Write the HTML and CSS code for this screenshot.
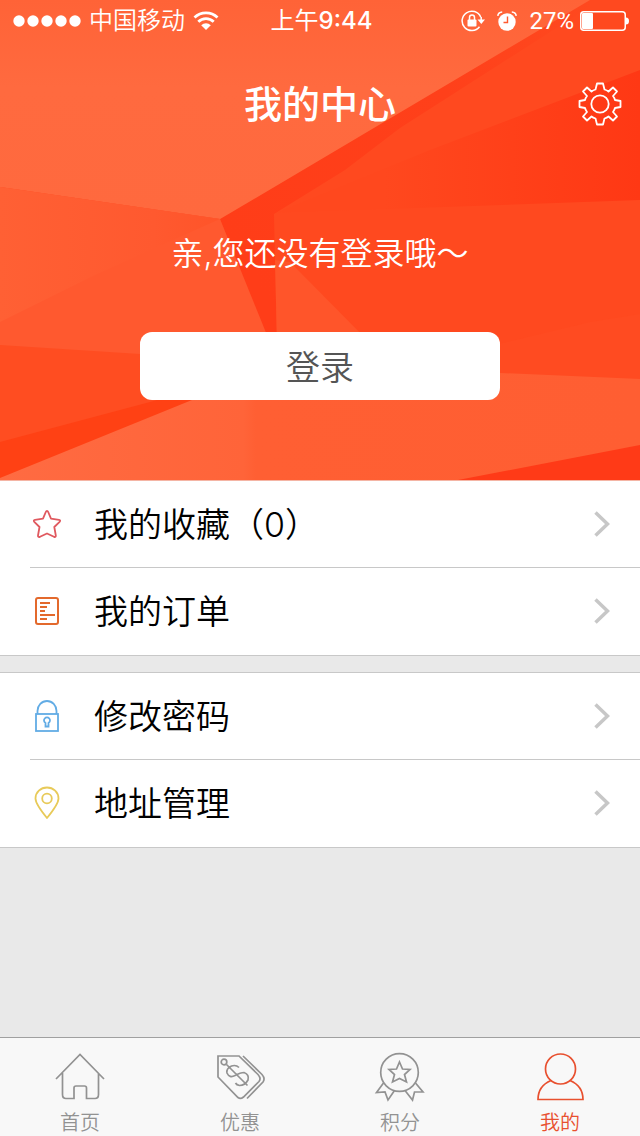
FILE: index.html
```html
<!DOCTYPE html>
<html lang="zh-CN">
<head>
<meta charset="utf-8">
<meta name="viewport" content="width=device-width, initial-scale=1">
<title>我的中心</title>
<link rel="stylesheet" href="styles.css">
</head>
<body>
<div class="app">
  <header class="hero">
    <svg class="hero-art" viewBox="0 0 640 480" preserveAspectRatio="none" aria-hidden="true">
      <defs>
        <linearGradient id="right-shade" x1="0.3" y1="0" x2="1" y2="0">
          <stop offset="0" stop-color="#ff481e"/><stop offset="1" stop-color="#ff3814"/>
        </linearGradient>
        <linearGradient id="top-light" x1="0" y1="0" x2="0" y2="1">
          <stop offset="0" stop-color="#ff6337"/><stop offset="0.4" stop-color="#ff6a3f"/><stop offset="1" stop-color="#ff693e"/>
        </linearGradient>
        <linearGradient id="left-light" x1="0" y1="0" x2="1" y2="0">
          <stop offset="0" stop-color="#ff6034"/><stop offset="0.7" stop-color="#ff592f"/><stop offset="1" stop-color="#ff5429"/>
        </linearGradient>
        <linearGradient id="floor" x1="0" y1="0" x2="1" y2="0">
          <stop offset="0" stop-color="#ff6b42"/><stop offset="0.38" stop-color="#ff6439"/><stop offset="0.4" stop-color="#ff5f33"/><stop offset="1" stop-color="#ff5e32"/>
        </linearGradient>
        <linearGradient id="band" gradientUnits="userSpaceOnUse" x1="220" y1="219" x2="590" y2="0">
          <stop offset="0" stop-color="#ff3d18"/><stop offset="0.6" stop-color="#ff401a"/><stop offset="1" stop-color="#ff491f"/>
        </linearGradient>
      </defs>
      <rect width="640" height="480" fill="#ff491f"/>
      <path d="M640 70 430 150 275 213 640 200Z" fill="url(#right-shade)"/>
      <path d="M590 0 220 219 268 345H277L274 214 345 170 400 128 500 64 600 0Z" fill="url(#band)"/>
      <path d="M275 260 277 345H372L290 262Z" fill="#ff552a"/>
      <path d="M0 0H590L220 219 0 187Z" fill="url(#top-light)"/>
      <path d="M0 187 220 219 271 345V410H0Z" fill="#ff592f"/>
      <path d="M0 187 220 219 95 275 0 322Z" fill="url(#left-light)"/>
      <path d="M0 345 140 354 290 370V410L0 450Z" fill="#ff4d21"/>
      <path d="M0 442 150 402 300 360V410L0 480Z" fill="#ff4114"/>
      <path d="M490 346 590 322 640 314V380H490Z" fill="#ff4b21"/>
      <path d="M0 478 192 400 300 373H500L640 379V480H0Z" fill="url(#floor)"/>
      <path d="M640 445 458 480H640Z" fill="#ff3a17"/>
    </svg>

    <div class="status">
      <div class="status-left">
        <svg width="68" height="12" viewBox="0 0 68 12" fill="#fff" role="img" aria-label="信号">
          <circle cx="6" cy="6" r="5.700"/><circle cx="20" cy="6" r="5.700"/><circle cx="34" cy="6" r="5.700"/><circle cx="48" cy="6" r="5.700"/><circle cx="62" cy="6" r="5.700"/>
        </svg>
        <span>中国移动</span>
        <svg width="26" height="20" viewBox="0 0 26 20" role="img" aria-label="无线网络">
          <path d="M1.500 6.600A16.500 16.500 0 0 1 24.500 6.600M5.300 10.700A11 11 0 0 1 20.700 10.700" fill="none" stroke="#fff" stroke-width="2.800"/>
          <path d="M13 19 8.200 14.200A7 7 0 0 1 17.800 14.200Z" fill="#fff"/>
        </svg>
      </div>
      <time class="status-time">上午<span class="clock">9:44</span></time>
      <div class="status-right">
        <svg width="24" height="22" viewBox="0 0 24 22" fill="none" stroke="#fff" stroke-width="1.500" role="img" aria-label="方向锁定">
          <path d="M19.700 7A9.700 9.700 0 1 0 18.500 16.800M20.200 7V10"/>
          <path d="M16.500 9.500H24L20.300 14Z" fill="#fff" stroke="none"/>
          <rect x="6.500" y="9.500" width="9" height="7" rx="1" fill="#fff" stroke="none"/>
          <path d="M8.500 10V7.500a2.500 2.500 0 0 1 5 0V10"/>
        </svg>
        <svg width="20" height="20" viewBox="0 0 20 20" role="img" aria-label="闹钟">
          <circle cx="10" cy="11" r="8.700" fill="#fff"/>
          <path d="M.8 4.800Q1.200 1.300 5.200 1M19.200 4.800Q18.800 1.300 14.800 1" fill="none" stroke="#fff" stroke-width="1.600"/>
          <path d="M10.500 5.500V11.500H6.500" fill="none" stroke="#ff5a30" stroke-width="1.400"/>
        </svg>
        <span class="battery">27%
          <svg width="50" height="20" viewBox="0 0 50 20" role="img" aria-label="电量">
            <rect x=".75" y=".75" width="44.500" height="18.500" rx="3" fill="none" stroke="#fff" stroke-width="1.500"/>
            <rect x="2" y="2" width="11" height="16" rx="1" fill="#fff"/>
            <path d="M46 6.500Q49 6.500 49 10T46 13.500Z" fill="#fff"/>
          </svg>
        </span>
      </div>
    </div>

    <div class="titlebar">
      <h1 class="title">我的中心</h1>
      <button class="settings" type="button" aria-label="设置">
        <svg width="44" height="44" viewBox="-22 -22 44 44" fill="none" stroke="#fff" stroke-width="1.800" stroke-linejoin="round">
          <circle r="8.700"/>
          <path d="M-3-20.500H3L4.500-14.500Q7-13.800 8.500-12.500L13-16.500 17-12.500 13-8Q14.500-6 15-4L20.500-3V3L15 4Q14.500 6 13 8L17 12.500 13 16.500 8.500 12.500Q7 13.800 4.500 14.500L3 20.500H-3L-4.500 14.500Q-7 13.800-8.500 12.500L-13 16.500-17 12.500-13 8Q-14.500 6-15 4L-20.500 3V-3L-15-4Q-14.500-6-13-8L-17-12.500-13-16.500-8.500-12.500Q-7-13.800-4.500-14.500Z"/>
        </svg>
      </button>
    </div>

    <p class="greeting">亲,您还没有登录哦～</p>
    <button class="login" type="button">登录</button>
  </header>

  <main class="content">
    <nav class="group group-first" aria-label="我的">
      <a class="row" href="#favorites">
        <span class="row-icon"><svg width="30" height="32" viewBox="0 0 30 32" fill="none" stroke="#e0595f" stroke-width="1.800" stroke-linejoin="round"><path d="M15 3Q15.800 3 16.200 4L19 10.700 27 11.800Q29 12.300 27.600 13.800L22.300 19 23.800 27.500Q24 29.500 22 28.800L15 25.500 8 28.800Q5.800 29.500 6 27.500L7.500 19 2.300 13.800Q1 12.300 3 11.800L11 10.700 13.800 4Q14.200 3 15 3Z"/></svg></span>
        <span class="row-label">我的收藏（0）</span>
        <svg class="chevron" width="16" height="26" viewBox="0 0 16 26"><path d="M1.500 1.500 13.500 13 1.500 24.500"/></svg>
      </a>
      <a class="row" href="#orders">
        <span class="row-icon"><svg width="30" height="32" viewBox="0 0 30 32" fill="none" stroke="#e3692c" stroke-width="2"><rect x="4" y="3" width="22" height="26" rx="2"/><path d="M8 8H18M8 12H15M8 16H13M8 20H23M8 24H15"/></svg></span>
        <span class="row-label">我的订单</span>
        <svg class="chevron" width="16" height="26" viewBox="0 0 16 26"><path d="M1.500 1.500 13.500 13 1.500 24.500"/></svg>
      </a>
    </nav>
    <nav class="group" aria-label="账户">
      <a class="row" href="#password">
        <span class="row-icon"><svg width="30" height="34" viewBox="0 0 30 34" fill="none" stroke="#62ace5" stroke-width="1.800"><rect x="4" y="15" width="22" height="17"/><path d="M5.500 15V12A9.500 10 0 0 1 24.500 12V15M13.500 24A3 3 0 1 1 16.500 24V27.500H13.500Z"/></svg></span>
        <span class="row-label">修改密码</span>
        <svg class="chevron" width="16" height="26" viewBox="0 0 16 26"><path d="M1.500 1.500 13.500 13 1.500 24.500"/></svg>
      </a>
      <a class="row" href="#address">
        <span class="row-icon"><svg width="30" height="34" viewBox="0 0 30 34" fill="none" stroke="#e8ca59" stroke-width="1.800" stroke-linejoin="round"><path d="M15 32Q3.500 18 3.500 12.500A11.500 11 0 0 1 26.500 12.500Q26.500 18 15 32Z"/><circle cx="15" cy="12.500" r="4.800"/></svg></span>
        <span class="row-label">地址管理</span>
        <svg class="chevron" width="16" height="26" viewBox="0 0 16 26"><path d="M1.500 1.500 13.500 13 1.500 24.500"/></svg>
      </a>
    </nav>
  </main>

  <nav class="tabs" aria-label="主导航">
    <a class="tab" href="#home">
      <svg width="52" height="50" viewBox="0 0 52 50"><path d="M2 27 26 2.500 50 27M8.500 21V42.500Q8.500 46.500 12 46.500H20V36Q20 34 22 34H30.500Q32.500 34 32.500 36V46.500H41Q44.500 46.500 44.500 42.500V21"/></svg>
      <span>首页</span>
    </a>
    <a class="tab" href="#deals">
      <svg width="52" height="50" viewBox="0 0 52 50"><path d="M4 4H25L44 22.500Q47.500 26.500 45 29.500L29.500 45Q26.500 47.500 24 45.500L4 25ZM29 4 48 22.500Q51.500 26.500 49 30L33 46.500"/><circle cx="10" cy="10" r="2.800"/><path d="M12.500 12.500 33.500 33.500M25 15.500Q22 12.500 17.500 14Q12 16.500 13 21Q15.500 26.500 21 23.500T30 20.500Q35.500 22.500 34 28Q31 33.500 25.500 33.500Q22.500 33 21.500 31"/></svg>
      <span>优惠</span>
    </a>
    <a class="tab" href="#points">
      <svg width="52" height="50" viewBox="0 0 52 50"><circle cx="25.500" cy="20.500" r="18.800"/><path d="M25.500 10 28.500 17 36 17.500 30.500 22.500 32.500 30 25.500 26.500 18.500 30 20.500 22.500 15 17.500 22.500 17ZM9.500 31 2.500 40.500 11 40 14 48 20.500 38.500M41.500 31 49 40 40.500 40 38.500 48 31 38.500"/></svg>
      <span>积分</span>
    </a>
    <a class="tab tab-active" href="#me" aria-current="page">
      <svg width="52" height="50" viewBox="0 0 52 50"><circle cx="26.500" cy="17" r="15"/><path d="M17 28.500Q4 34 4 47.500H49Q49 34 36 28.500"/></svg>
      <span>我的</span>
    </a>
  </nav>
</div>
</body>
</html>
```

FILE: styles.css
```css
* {
  box-sizing: border-box;
}

body {
  margin: 0;
  background: #e9e9e9;
  color: #000;
  font-family: Inter, "Noto Sans CJK SC", sans-serif;
}

a {
  color: inherit;
  text-decoration: none;
}

button {
  border: 0;
  padding: 0;
  font: inherit;
  cursor: pointer;
}

svg {
  display: block;
  flex: none;
}

.app {
  display: flex;
  flex-direction: column;
  min-height: 100vh;
}

.hero {
  position: relative;
  isolation: isolate;
  display: flex;
  flex-direction: column;
  align-items: center;
  padding-bottom: 80px;
  color: #fff;
}

.hero-art {
  position: absolute;
  inset: 0;
  z-index: -1;
  width: 100%;
  height: 100%;
}

.status {
  align-self: stretch;
  display: grid;
  grid-template-columns: 1fr auto 1fr;
  align-items: center;
  height: 41px;
  padding: 0 10px 0 13px;
  font-size: 24px;
  line-height: 40px;
  font-weight: 350;
}

.status-left,
.status-right,
.battery {
  display: flex;
  align-items: center;
  gap: 8px;
}

.status-right {
  justify-content: flex-end;
  gap: 12px;
}

.battery {
  gap: 6px;
  font-family: Roboto, sans-serif;
  font-weight: 400;
}

.status-time {
  font-weight: 400;
}

.clock {
  font-weight: 500;
}

.titlebar {
  align-self: stretch;
  display: grid;
  grid-template-columns: 1fr auto 1fr;
  align-items: center;
  height: 126px;
  padding: 0 18px;
}

.title {
  grid-column: 2;
  margin: 0;
  font-size: 38px;
  line-height: 56px;
  font-weight: 500;
}

.settings {
  justify-self: end;
  background: none;
}

.greeting {
  margin: 63px 0 54px;
  font-size: 32px;
  line-height: 48px;
  font-weight: 350;
}

.login {
  width: 360px;
  max-width: 90%;
  padding: 12px 0 8px;
  border-radius: 12px;
  background: #fff;
  color: #555;
  font-size: 34px;
  line-height: 48px;
  font-weight: 350;
}

.content {
  flex: 1;
  display: flex;
  flex-direction: column;
  gap: 16px;
}

.group {
  border-top: 1px solid #c8c8c8;
  border-bottom: 1px solid #c8c8c8;
  background: #fff;
  padding-left: 30px;
}

.group-first {
  border-top-color: #f4b5a5;
}

.row {
  display: flex;
  align-items: center;
  height: 87px;
  padding: 0 30px 1px 0;
  font-size: 34px;
  line-height: 48px;
}

.row:first-child {
  border-bottom: 1px solid #c8c8c8;
}

.row-icon {
  width: 64px;
  padding-left: 2px;
}

.row-label {
  flex: 1;
  padding-top: 2px;
  font-weight: 350;
}

.chevron {
  fill: none;
  stroke: #c7c7c7;
  stroke-width: 3.5;
}

.tabs {
  display: grid;
  grid-template-columns: repeat(4, 1fr);
  border-top: 1px solid #a0a0a0;
  background: #f8f8f8;
}

.tab {
  display: flex;
  flex-direction: column;
  align-items: center;
  height: 98px;
  padding-top: 14px;
  gap: 7px;
  color: #929292;
  font-size: 20px;
  line-height: 28px;
  font-weight: 350;
}

.tab svg {
  fill: none;
  stroke: currentColor;
  stroke-width: 1.7;
}

.tab-active {
  color: #e8502f;
}
```
